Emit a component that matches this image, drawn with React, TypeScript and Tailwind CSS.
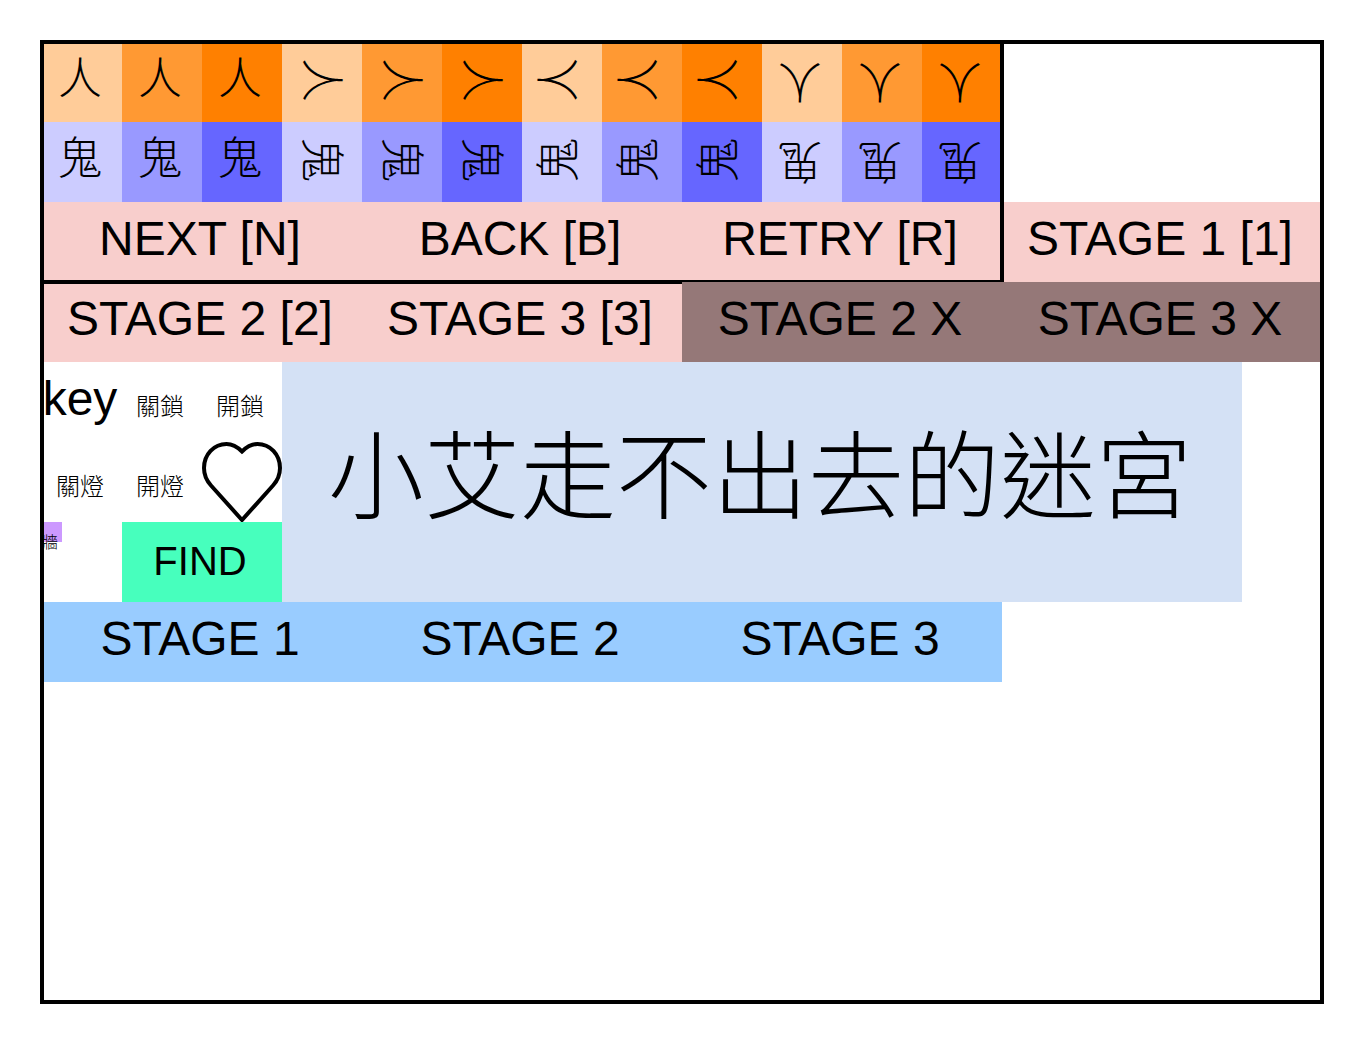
import type { ReactNode } from "react";

const DIRECTIONS = ["rotate-0", "rotate-90", "-rotate-90", "rotate-180"];
const PERSON_SHADES = ["bg-[#ffcc99]", "bg-[#ff9933]", "bg-[#ff8000]"];
const GHOST_SHADES = ["bg-[#ccccff]", "bg-[#9999ff]", "bg-[#6666ff]"];

const LABEL = "flex items-center justify-center pr-1 whitespace-nowrap leading-none text-5xl";

function Tile({ children }: { children: ReactNode }) {
  return <div className={`${LABEL} pb-1.5`}>{children}</div>;
}

function Action({ className, disabled, children }: { className: string; disabled?: boolean; children: ReactNode }) {
  return (
    <button type="button" disabled={disabled} className={`${LABEL} pb-1.5 ${className}`}>
      {children}
    </button>
  );
}

function Sprites({ glyph, shades }: { glyph: string; shades: string[] }) {
  return (
    <>
      {DIRECTIONS.map((direction) =>
        shades.map((shade) => (
          <div key={direction + shade} className={`grid pr-1 pb-1 ${shade}`}>
            <div className={`flex items-center justify-center pb-0.5 text-[44px] leading-none ${direction}`}>
              {glyph}
            </div>
          </div>
        )),
      )}
    </>
  );
}

function SmallTile({ children }: { children: string }) {
  return (
    <Tile>
      <div>
        <span className="text-2xl leading-none">{children}</span>
      </div>
    </Tile>
  );
}

export default function App() {
  return (
    <div
      lang="zh-Hant"
      className="min-h-screen bg-white p-[42px] font-['Liberation_Sans','Noto_Sans_CJK_TC',sans-serif] font-light text-black"
    >
      <main className="relative isolate grid min-h-[calc(100vh-84px)] grid-cols-[repeat(16,minmax(0,1fr))] content-start auto-rows-[80px]">
        <section className="relative z-10 col-span-12 row-span-3 grid grid-cols-12 grid-rows-3">
          <Sprites glyph="人" shades={PERSON_SHADES} />
          <Sprites glyph="鬼" shades={GHOST_SHADES} />
          <Action className="col-span-4 bg-[#f8cecc]">NEXT [N]</Action>
          <Action className="col-span-4 bg-[#f8cecc]">BACK [B]</Action>
          <Action className="col-span-4 bg-[#f8cecc]">RETRY [R]</Action>
          <div className="pointer-events-none absolute -inset-0.5 border-4 border-black" />
        </section>
        <div className="col-span-4 row-span-3 grid grid-rows-3">
          <Action className="row-start-3 bg-[#f8cecc]">STAGE 1 [1]</Action>
        </div>

        <Action className="col-span-4 bg-[#f8cecc]">STAGE 2 [2]</Action>
        <Action className="col-span-4 bg-[#f8cecc]">STAGE 3 [3]</Action>
        <Action disabled className="z-20 col-span-4 bg-[#957878]">STAGE 2 X</Action>
        <Action disabled className="z-20 col-span-4 bg-[#957878]">STAGE 3 X</Action>

        <section className="col-span-3 row-span-3 grid grid-cols-3 grid-rows-3">
          <Tile>key</Tile>
          <SmallTile>關鎖</SmallTile>
          <SmallTile>開鎖</SmallTile>
          <SmallTile>關燈</SmallTile>
          <SmallTile>開燈</SmallTile>
          <div>
            <svg viewBox="0 0 80 80" className="size-full" fill="none" stroke="black" strokeWidth="4" aria-label="heart">
              <path d="M40 9.5C35 4.5 30.5 2 24.5 2C12 2 2 12.5 2 26C2 33 4.5 38.5 9 43.5L40 78L71 43.5C75.5 38.5 78 33 78 26C78 12.5 68 2 55.5 2C49.5 2 45 4.5 40 9.5Z" />
            </svg>
          </div>
          <div>
            <div className={`${LABEL} size-5 bg-[#cc99ff]`}>
              <div>
                <span className="text-base leading-none">牆</span>
              </div>
            </div>
          </div>
          <Action className="col-span-2 bg-[#47ffbd]">
            <div>
              <span className="text-[40px] leading-none">FIND</span>
            </div>
          </Action>
        </section>
        <header className="col-span-12 row-span-3 flex items-center justify-center bg-[#d4e1f5] pr-1 pb-2">
          <h1 className="text-8xl leading-none font-light whitespace-nowrap">小艾走不出去的迷宮</h1>
        </header>

        <Action className="col-span-4 col-start-1 bg-[#99ccff]">STAGE 1</Action>
        <Action className="col-span-4 bg-[#99ccff]">STAGE 2</Action>
        <Action className="col-span-4 bg-[#99ccff]">STAGE 3</Action>
        <div className="pointer-events-none absolute -inset-0.5 z-30 border-4 border-black" />
      </main>
    </div>
  );
}
